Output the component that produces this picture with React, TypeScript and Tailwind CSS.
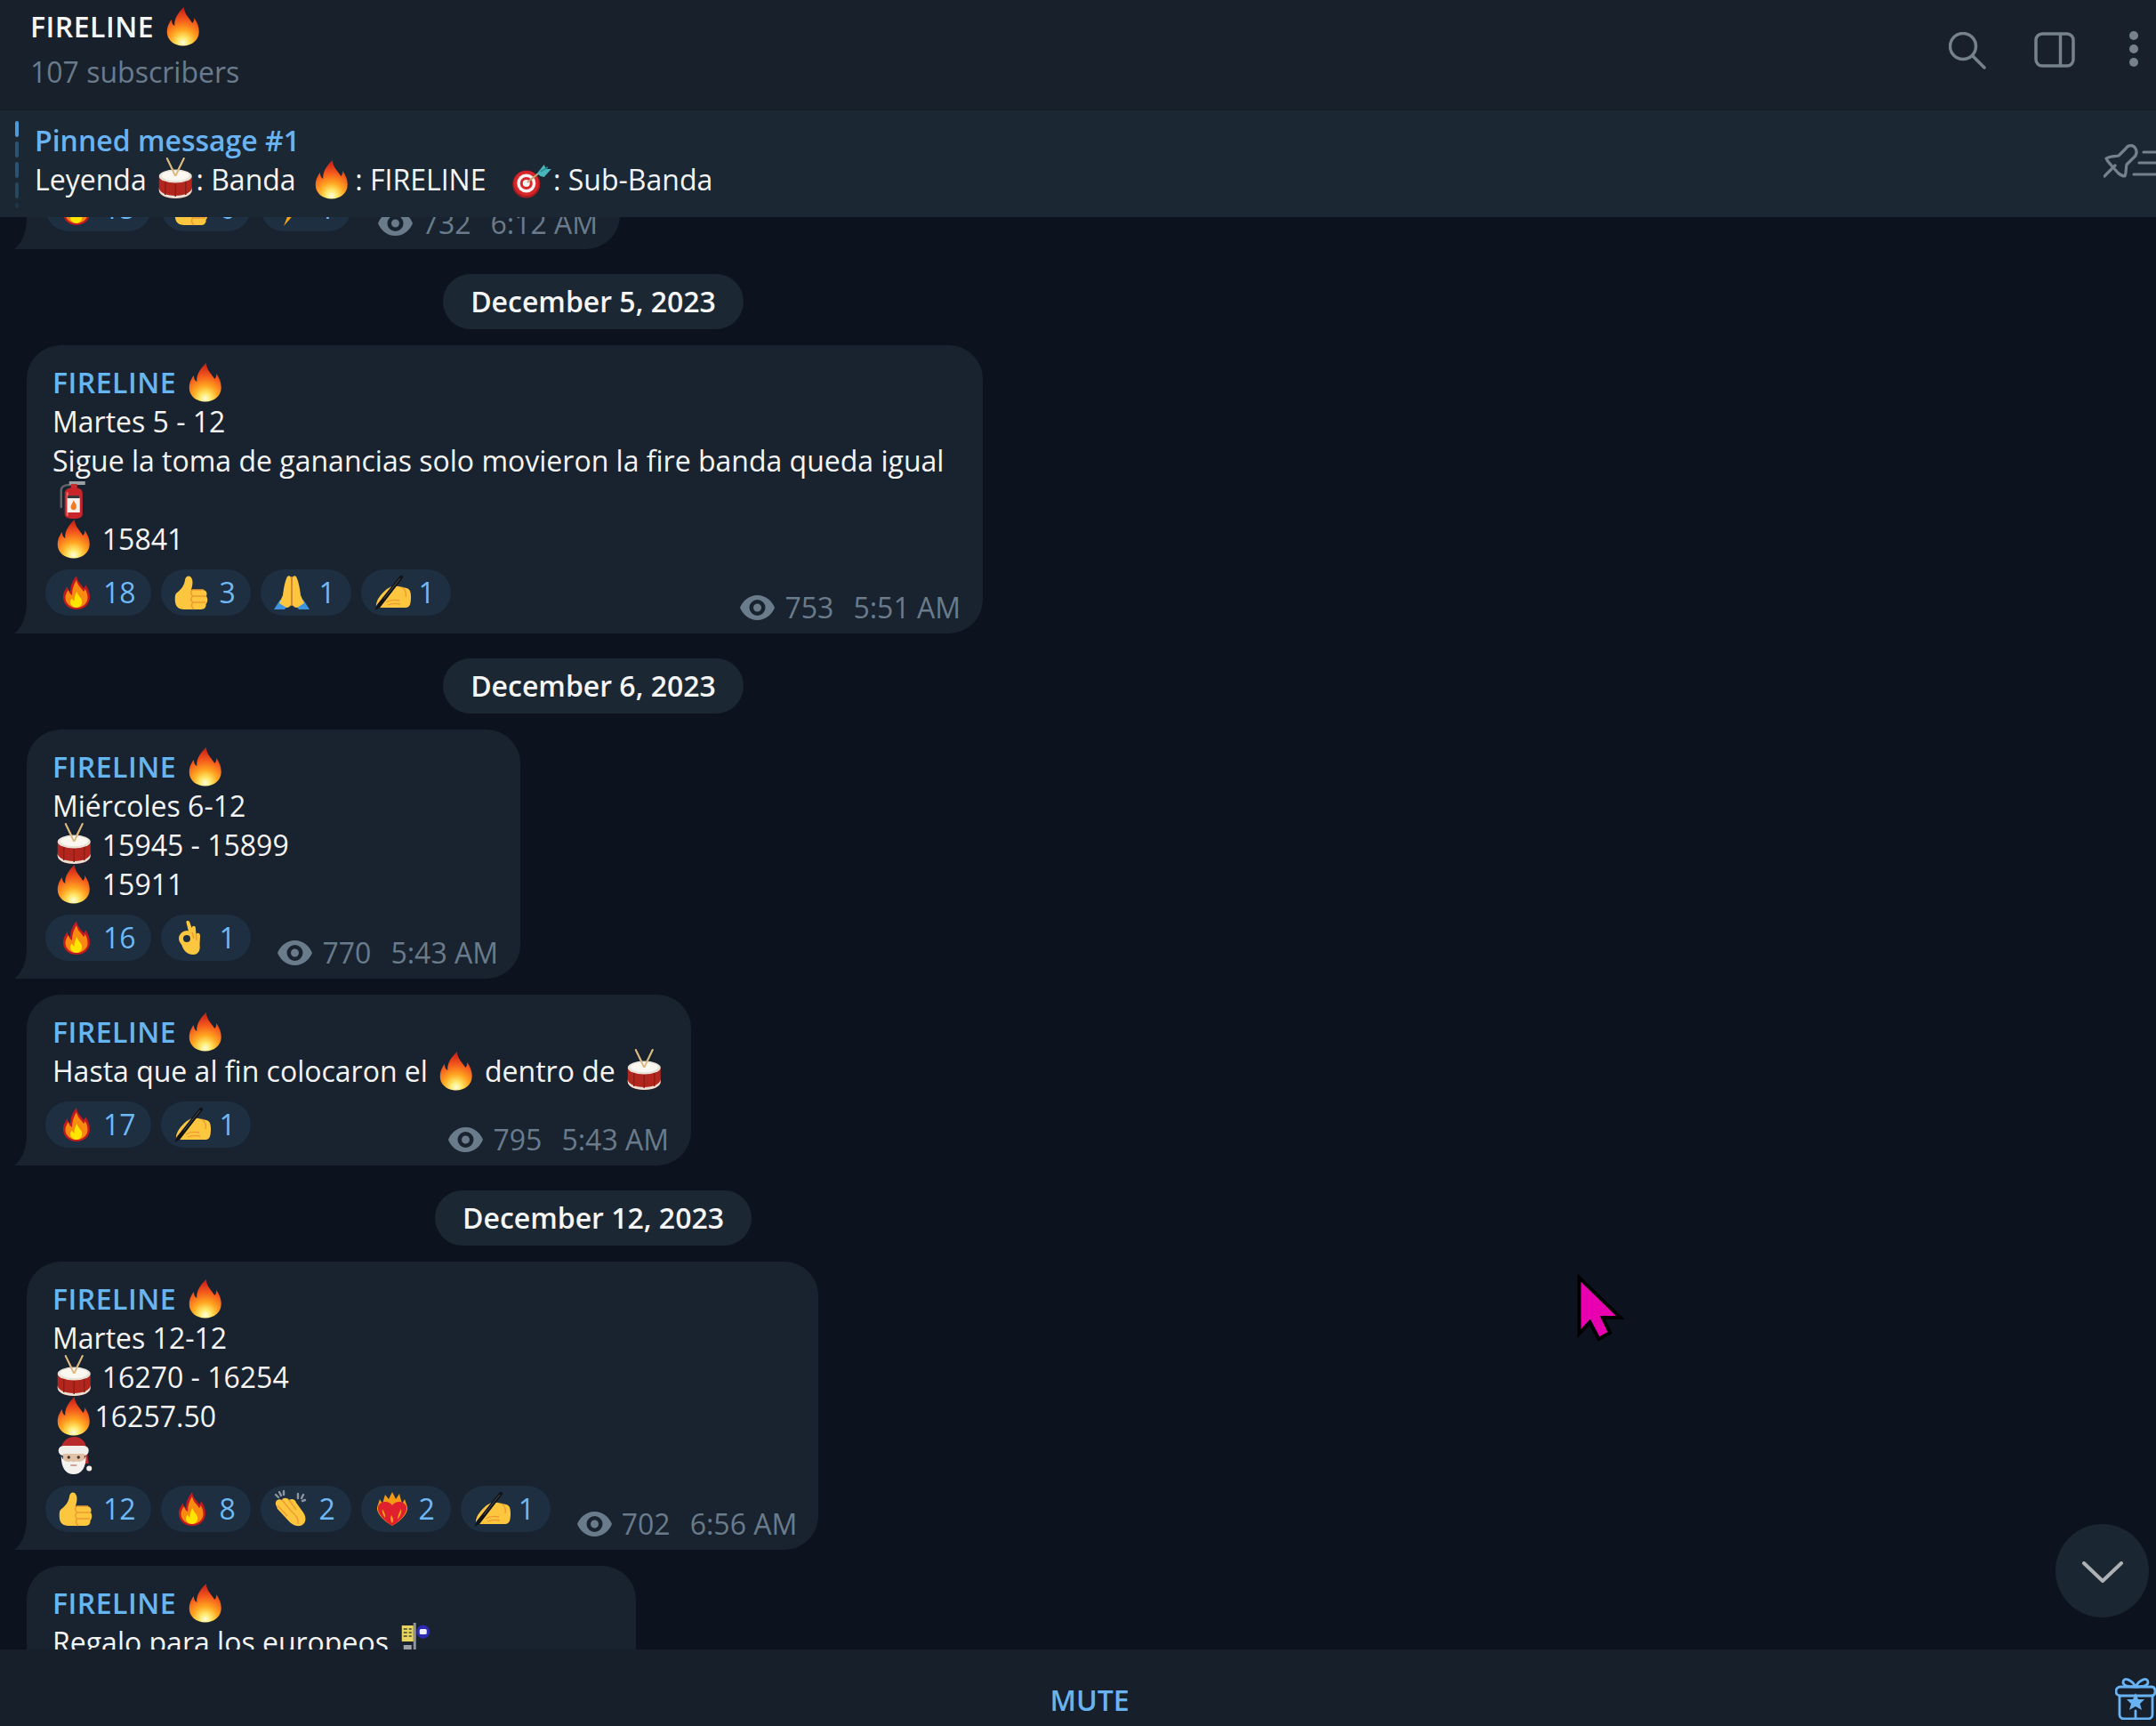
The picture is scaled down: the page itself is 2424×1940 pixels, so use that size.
import type { ReactNode } from "react";

// inline emoji, drawn on a 46x44 box so they sit in the 44px text lines
function Em({ children }: { children: ReactNode }) {
  return (
    <svg viewBox="0 0 46 44" className="inline-block h-[44px] w-[47.500px] shrink-0 align-top overflow-visible">
      {children}
    </svg>
  );
}

function RE({ children }: { children: ReactNode }) {
  return (
    <svg viewBox="0 0 38 40" className="h-[40px] w-[38px] shrink-0 overflow-visible">
      {children}
    </svg>
  );
}

function Flame() {
  return (
    <Em>
      <defs>
        <radialGradient id="flameFill" gradientUnits="userSpaceOnUse" cx="23" cy="40" r="38">
          <stop offset="0" stopColor="#fffde0" />
          <stop offset="0.16" stopColor="#ffe96a" />
          <stop offset="0.38" stopColor="#ffa621" />
          <stop offset="0.68" stopColor="#f4581c" />
          <stop offset="1" stopColor="#c9201a" />
        </radialGradient>
      </defs>
      <path
        d="M24 0C24.500 8 30 12 33.500 18C35.500 16 35.500 14 35.500 12C39 17 41 22 41 27.500C41 37 33 43.500 23 43.500C13 43.500 5 37 5 28C5 22 7.500 17.500 10 14C10.500 18 11.500 20 13.500 21C13 12 18 6 24 0Z"
        fill="url(#flameFill)"
      />
    </Em>
  );
}

function Drum() {
  return (
    <Em>
      <path d="M14 -2L24 18M33 -2L23 18" stroke="#d9b77e" strokeWidth="1.800" strokeLinecap="round" />
      <path d="M5 18V34C5 39 13 43 23.500 43C34 43 42 39 42 34V18Z" fill="#b3261e" />
      <path d="M5 34C5 39 13 43 23.500 43C34 43 42 39 42 34V31C42 36 34 40 23.500 40C13 40 5 36 5 31Z" fill="#e9dfd2" />
      <path d="M12 24V39M23.500 26V41M35 24V39" stroke="#8c1d17" strokeWidth="1.500" />
      <ellipse cx="23.500" cy="18" rx="18.500" ry="7.500" fill="#e8e2d8" />
      <ellipse cx="23.500" cy="17.500" rx="15.500" ry="5.500" fill="#fbf8f2" />
      <path d="M14 -2L23 17M33 -2L24 17" stroke="#d9b77e" strokeWidth="1.800" strokeLinecap="round" />
    </Em>
  );
}

function Target() {
  return (
    <Em>
      <circle cx="18" cy="27" r="15.500" fill="#a61b1f" />
      <circle cx="18" cy="26" r="14" fill="#d8262c" />
      <circle cx="18" cy="26" r="10.500" fill="#f8f2f0" />
      <circle cx="18" cy="26" r="7" fill="#d8262c" />
      <circle cx="18" cy="26" r="4" fill="#f8f2f0" />
      <path d="M19 25L34 13" stroke="#c9a770" strokeWidth="2" />
      <path d="M30 15L38 5L40 10L46 10L38 19L34 18Z" fill="#49b8bd" />
      <path d="M34 13L42 8" stroke="#2a8f96" strokeWidth="1.500" />
    </Em>
  );
}

function Extinguisher() {
  return (
    <Em>
      <path d="M9 30V11C9 7 13 5 18 5L34 3" fill="none" stroke="#5d6367" strokeWidth="2.500" strokeLinecap="round" />
      <path d="M18 1H36V5H18Z" fill="#9aa0a4" />
      <rect x="20" y="4" width="7" height="5" fill="#c42a2e" />
      <path d="M13 14C13 10 18 8 23 8C29 8 33 10 33 14V38C33 41 30 43 23 43C16 43 13 41 13 38Z" fill="#c8242b" />
      <path d="M16 14V39" stroke="#ea6a6a" strokeWidth="2" strokeLinecap="round" />
      <rect x="16" y="17" width="14" height="19" fill="#f4f1ec" />
      <rect x="16" y="17" width="14" height="3" fill="#38383c" />
      <path d="M23 22C24 25 27 27 26 31C25 34 21 34 20 31C19 28 22 26 23 22Z" fill="#ef7b22" />
    </Em>
  );
}

function Santa() {
  return (
    <Em>
      <path d="M9 15C10 5 17 1 24 1C32 1 37 6 38 17L40 31H34V15Z" fill="#b92a2a" />
      <circle cx="40.500" cy="36.500" r="3" fill="#f2efea" />
      <rect x="6" y="11" width="34" height="11" rx="5.500" fill="#f2efea" />
      <path d="M11 20H35V32H11Z" fill="#e0c1a6" />
      <circle cx="17.500" cy="24" r="1.700" fill="#4a3528" />
      <circle cx="28.500" cy="24" r="1.700" fill="#4a3528" />
      <path d="M9 22C9 36 14 43 23 43C32 43 37 36 37 22C35 28 32 29 28 29C26 28 24.500 28.500 23 29.500C21.500 28.500 20 28 18 29C14 29 11 28 9 22Z" fill="#f4f2ee" />
      <path d="M20 33H26" stroke="#c9887b" strokeWidth="1.500" strokeLinecap="round" />
    </Em>
  );
}

function BusStop() {
  return (
    <Em>
      <rect x="19" y="0" width="3" height="44" fill="#8f959a" />
      <rect x="6" y="3" width="13" height="18" fill="#e7d560" />
      <path d="M8 7H12M14 7H17M8 11H12M14 11H17M8 15H12M14 15H17" stroke="#6d6a3a" strokeWidth="2" />
      <circle cx="30" cy="10" r="7.500" fill="#2d2ab0" />
      <rect x="26" y="7" width="8" height="6" rx="1.500" fill="#f0f0f8" />
      <rect x="8" y="25" width="9" height="19" fill="#9da1a5" />
    </Em>
  );
}

function RFlame() {
  return (
    <RE>
      <path d="M19 1C20 8 24 10 27 15C28.500 13.500 29 12 29 11C32 15 34 20 34 25C34 33 28 39 19 39C10 39 4 33 4 25C4 20 6 17 9 13C9 16 10 18 12 19C12 12 15 6 19 1Z" fill="#c21a1e" />
      <path d="M19 6C20 12 24 14 27 19C28 18 28.500 17 28.500 16C30.500 19 31.500 22 31.500 26C31.500 32 26 37 19 37C12 37 6.500 32 6.500 26C6.500 22 8 20 10 17C10.500 20 12 22 14 23C14 16 16 11 19 6Z" fill="#f98a10" />
      <path d="M19.500 19C20 23 24 25 25 29C26 33 23 37 19 37C15 37 12 34 12 30.500C12 29 13 27.500 14 26.500C14.500 28 15.500 29 16.500 29.500C16.500 25.500 17.500 22 19.500 19Z" fill="#ffe500" />
    </RE>
  );
}

function RThumb() {
  return (
    <RE>
      <path d="M1 21C6 17 10 13 11 6C11.500 1 16.500 0 18.500 4C20.500 8 19 13 18 17H31C35 17 36.500 21 35 24C37 27 36.500 31 34.500 33C35 36 33 39 29 39H12C6 39 1 38 0 31C-0.500 27 -0.500 23 1 21Z" fill="#fcc63f" />
      <path d="M19 17H32M20 24H35M20 31H34M19 17C17 19 17 22 20 24C17 26 17 29 20 31C18 33 18 36 21 39" fill="none" stroke="#ee9a33" strokeWidth="1.500" />
    </RE>
  );
}

function RPray() {
  return (
    <RE>
      <path d="M6 28L-1 39H11L16 33ZM32 28L39 39H27L22 33Z" fill="#3f94dd" />
      <path d="M18.500 33V4C18 1 15 0 13.500 3C11 9 10 15 9 23L5 32L13 37C16 37 18 35 18.500 33Z" fill="#fcc63f" />
      <path d="M19.500 33V4C20 1 23 0 24.500 3C27 9 28 15 29 23L33 32L25 37C22 37 20 35 19.500 33Z" fill="#fcc63f" />
      <path d="M19 2V35" stroke="#ec8b2e" strokeWidth="1.600" />
    </RE>
  );
}

function RWrite() {
  return (
    <RE>
      <path d="M1 33C2 27 7 21 13 16C17 13 21 12 26 13L35 15C39 16 40 20 40 25C40 32 39 37 34 37H8C4 37 1 36 1 33Z" fill="#fcc63f" />
      <path d="M12 31C17 28 22 28 27 29M14 34C19 32 23 32 28 33M30 14C34 17 35 21 34 25" fill="none" stroke="#ee9a33" strokeWidth="1.300" />
      <path d="M-0.500 40L2 33.500L27.500 1.500C29 -0.500 32 1.500 31 3.500L5.500 36.500Z" fill="#111316" />
      <path d="M27.500 4.500L10 26.500" stroke="#4b5157" strokeWidth="1" strokeLinecap="round" />
    </RE>
  );
}

function ROk() {
  return (
    <RE>
      <circle cx="13" cy="21" r="6.500" fill="none" stroke="#fcc63f" strokeWidth="5" />
      <path d="M7 27C9 35 14 39 20 39C26 39 28.500 34 27.500 28L28 18C28 14 24.500 14 23.500 16L23 10C23 6 19.500 6 18.500 9L16.500 3C15.500 0 12 0 12.500 3L15 13L20 20C19 26 13 29 7 27Z" fill="#fcc63f" />
      <path d="M19 14L21 21M23.500 16L24 23" fill="none" stroke="#ee9a33" strokeWidth="1.400" />
    </RE>
  );
}

function RClap() {
  return (
    <RE>
      <path d="M1 15C0 10 5 8 8 10C9 7 14 7 16 10C19 8 23 9 24 13L32 24C36 30 35 36 30 38.500C25 40.500 19 38 15 33L3 20Z" fill="#fcc63f" />
      <path d="M8 10L19 23M16 10L24 21M3 16L14 28M19 23C24 27 27 32 26 37" fill="none" stroke="#ee9a33" strokeWidth="1.300" />
      <path d="M5 1L7 5M10 0L10 4M1 4L4 7M26 3L26 8M32 4L30 8M34 10L31 11" stroke="#8d96a0" strokeWidth="2.400" strokeLinecap="round" />
    </RE>
  );
}

function RHeart() {
  return (
    <RE>
      <path d="M5 9L8 14L11 4L15 9L19 1L23 9L27 3L30 14L33 9L36 18C37 24 30 33 19 39C8 33 1 24 2 18Z" fill="#f59a14" />
      <path d="M19 16C23 10 33 11 35 18C36 24 29 33 19 39C9 33 2 24 3 18C5 11 15 10 19 16Z" fill="#e0202e" />
      <path d="M8 20C7 25 10 28 11 30C12 27 10 24 8 20ZM29 20C30 25 27 29 25 32C25 27 27 24 29 20ZM18 27C16 31 18 35 19 36C21 33 20 30 18 27Z" fill="#f9a01b" />
    </RE>
  );
}

function RBolt() {
  return (
    <RE>
      <path d="M24 0L6 22H17L10 40L32 15H20Z" fill="#f4a51c" />
    </RE>
  );
}

function Eye() {
  return (
    <svg viewBox="0 0 39 28" className="mr-[11px] h-[28px] w-[39px] shrink-0" fill="#6a7b8b">
      <path fillRule="evenodd" d="M19.500 0C29 0 36 6.500 39 14C36 21.500 29 28 19.500 28C10 28 3 21.500 0 14C3 6.500 10 0 19.500 0ZM19.500 5A9 9 0 1 0 19.500 23A9 9 0 1 0 19.500 5ZM19.500 9.500A4.500 4.500 0 1 1 19.500 18.500A4.500 4.500 0 1 1 19.500 9.500Z" />
    </svg>
  );
}

function Reaction({ icon, count }: { icon: ReactNode; count: string }) {
  return (
    <div className="flex h-[52px] items-center rounded-full bg-[#1d2f41] pl-[16px] pr-[17.800px]">
      {icon}
      <span className="ml-[11px] text-[32px] leading-none text-[#6fb9f5]">{count}</span>
    </div>
  );
}

function Meta({ views, time }: { views: string; time: string }) {
  return (
    <div className="-mb-[5px] ml-auto flex h-[28px] items-center whitespace-nowrap pl-[30px] text-[32px] text-[#6a7b8b]">
      <Eye />
      <span>{views}</span>
      <span className="ml-[22px]">{time}</span>
    </div>
  );
}

function Name() {
  return (
    <div className="font-semibold tracking-[0.5px] text-[#66b6f2]">
      FIRELINE <Flame />
    </div>
  );
}

interface BubbleProps {
  width: string;
  children?: ReactNode;
  reactions?: ReactNode;
  meta?: ReactNode;
}

function Bubble({ width, children, reactions, meta }: BubbleProps) {
  return (
    <div className={`relative ml-[30px] rounded-[38px] rounded-bl-none bg-[#19232f] pb-[20px] pl-[29px] pt-[20px] ${width}`}>
      <svg viewBox="0 0 14 36" className="absolute -left-[14px] bottom-0 h-[36px] w-[14px]">
        <path d="M14 0C14 16 9 30 0 36H14Z" fill="#19232f" />
      </svg>
      <div className="whitespace-pre">{children}</div>
      {reactions && (
        <div className="-ml-[8px] mt-[12px] flex items-end pr-[25px]">
          <div className="flex gap-[11px]">{reactions}</div>
          {meta}
        </div>
      )}
    </div>
  );
}

function DatePill({ children }: { children: ReactNode }) {
  return (
    <div className="mb-[18px] mt-[28px] self-center rounded-full bg-[#1b2733] px-[31px] text-[32px] font-semibold leading-[62px] text-[#f5f5f5]">
      {children}
    </div>
  );
}

export default function App() {
  return (
    <div
      className="relative flex h-[1940px] w-full flex-col overflow-hidden bg-[#0c131e] text-[32px] leading-[44px] text-[#f5f5f5]"
      style={{ fontFamily: '"Open Sans", "Noto Sans", sans-serif' }}
    >
      <header className="flex h-[124px] shrink-0 justify-between border-b border-[#131b24] bg-[#18212b] pl-[34px]">
        <div className="pt-[8px]">
          <div className="font-semibold tracking-[0.5px]">
            FIRELINE <Flame />
          </div>
          <div className="mt-[7px] text-[#6a7b8b]">107 subscribers</div>
        </div>
        <div className="flex items-start pt-[36px]">
          <svg viewBox="0 0 42 42" fill="none" stroke="#75818d" strokeWidth="3.500" strokeLinecap="round" className="h-[42px] w-[42px]">
            <circle cx="16" cy="16" r="14.500" />
            <path d="M27 27L40 40" />
          </svg>
          <svg viewBox="0 0 46 40" fill="none" stroke="#75818d" strokeWidth="3.500" className="ml-[54px] h-[40px] w-[46px]">
            <rect x="2" y="2" width="42" height="36" rx="7" />
            <path d="M29.500 2V38" />
          </svg>
          <svg viewBox="0 0 10 40" fill="#75818d" className="ml-[61px] mr-[20px] mt-[-1px] h-[40px] w-[10px]">
            <circle cx="5" cy="5" r="5" />
            <circle cx="5" cy="20" r="5" />
            <circle cx="5" cy="35" r="5" />
          </svg>
        </div>
      </header>

      <div className="relative z-10 flex h-[120px] shrink-0 items-start justify-between bg-[#1b2733] pl-[17px]">
        <div className="flex pt-[12px]">
          <div className="flex w-[4px] flex-col gap-[5px] pt-0">
            <div className="h-[18px] rounded-sm bg-[#4f9bd9]" />
            <div className="h-[18px] rounded-sm bg-[#2a5375]" />
            <div className="h-[18px] rounded-sm bg-[#2a5375]" />
            <div className="h-[18px] rounded-sm bg-[#274660]" />
            <div className="h-[6px] rounded-sm bg-[#223649]" />
          </div>
          <div className="ml-[18px] whitespace-pre">
            <div className="font-semibold text-[#6ab3f3]">Pinned message #1</div>
            <div>
              Leyenda <Drum />: Banda  <Flame />
              <span className="ml-[2.500px]">: FIRELINE  </span>
              <span className="ml-[10px]">
                <Target />
              </span>
              <span className="ml-[1.500px]">: Sub-Banda</span>
            </div>
          </div>
        </div>
        <svg viewBox="0 0 59 38" fill="none" stroke="#75818d" strokeWidth="3.200" strokeLinecap="round" strokeLinejoin="round" className="mt-[38px] h-[38px] w-[59px]">
          <path d="M1 36L13 24" />
          <path d="M3 16C8 13 14 14 17 13L25 5C28 0 34 1 36 5C38 9 37 13 33 16L26 23C25 26 26 31 24 36C21 36 18 34 16 32L8 23C6 21 4 19 3 16Z" />
          <path d="M45 9H59M40 21H59M34 34H59" />
        </svg>
      </div>

      <main className="relative min-h-0 flex-1 overflow-hidden">
        <div className="-mt-[68px] flex w-[1334px] flex-col">
          <Bubble
            width="w-[667px]"
            reactions={
              <>
                <Reaction icon={<RFlame />} count="15" />
                <Reaction icon={<RThumb />} count="6" />
                <Reaction icon={<RBolt />} count="1" />
              </>
            }
            meta={<Meta views="732" time="6:12 AM" />}
          />

          <DatePill>December 5, 2023</DatePill>
          <Bubble
            width="w-[1075px]"
            reactions={
              <>
                <Reaction icon={<RFlame />} count="18" />
                <Reaction icon={<RThumb />} count="3" />
                <Reaction icon={<RPray />} count="1" />
                <Reaction icon={<RWrite />} count="1" />
              </>
            }
            meta={<Meta views="753" time="5:51 AM" />}
          >
            <Name />
            <div>Martes 5 - 12</div>
            <div>Sigue la toma de ganancias solo movieron la fire banda queda igual</div>
            <div>
              <Extinguisher />
            </div>
            <div>
              <Flame /> 15841
            </div>
          </Bubble>

          <DatePill>December 6, 2023</DatePill>
          <Bubble
            width="w-[555px]"
            reactions={
              <>
                <Reaction icon={<RFlame />} count="16" />
                <Reaction icon={<ROk />} count="1" />
              </>
            }
            meta={<Meta views="770" time="5:43 AM" />}
          >
            <Name />
            <div>Miércoles 6-12</div>
            <div>
              <Drum /> 15945 - 15899
            </div>
            <div>
              <Flame /> 15911
            </div>
          </Bubble>

          <div className="h-[18px] shrink-0" />
          <Bubble
            width="w-[747px]"
            reactions={
              <>
                <Reaction icon={<RFlame />} count="17" />
                <Reaction icon={<RWrite />} count="1" />
              </>
            }
            meta={<Meta views="795" time="5:43 AM" />}
          >
            <Name />
            <div>
              Hasta que al fin colocaron el <Flame /> dentro de <Drum />
            </div>
          </Bubble>

          <DatePill>December 12, 2023</DatePill>
          <Bubble
            width="w-[890px]"
            reactions={
              <>
                <Reaction icon={<RThumb />} count="12" />
                <Reaction icon={<RFlame />} count="8" />
                <Reaction icon={<RClap />} count="2" />
                <Reaction icon={<RHeart />} count="2" />
                <Reaction icon={<RWrite />} count="1" />
              </>
            }
            meta={<Meta views="702" time="6:56 AM" />}
          >
            <Name />
            <div>Martes 12-12</div>
            <div>
              <Drum /> 16270 - 16254
            </div>
            <div>
              <Flame />
              16257.50
            </div>
            <div>
              <Santa />
            </div>
          </Bubble>

          <div className="h-[18px] shrink-0" />
          <Bubble width="w-[685px]">
            <Name />
            <div>
              Regalo para los europeos <BusStop />
            </div>
          </Bubble>
        </div>

        {/* scroll to bottom */}
        <div className="absolute bottom-[36px] right-[8px] flex h-[105px] w-[105px] items-center justify-center rounded-full bg-[#1a2632]">
          <svg viewBox="0 0 46 24" fill="none" stroke="#adb1b5" strokeWidth="4" strokeLinecap="round" strokeLinejoin="round" className="mt-[2px] h-[24px] w-[46px]">
            <path d="M2 2L23 22L44 2" />
          </svg>
        </div>

        {/* cursor */}
        <svg viewBox="0 0 54 77" className="absolute left-[1773px] top-[1187px] h-[77px] w-[54px]">
          <path d="M2.500 5V68L14.500 55L24.500 74L37 67L29 50H49Z" fill="#e800b0" stroke="#000" strokeWidth="4" />
        </svg>
      </main>

      <footer className="relative flex h-[86px] shrink-0 items-center justify-center bg-[#17202a]">
        <span className="pl-[26px] pt-[27px] text-[32px] font-semibold uppercase text-[#6ab3f3]">Mute</span>
        <svg viewBox="0 0 46 48" fill="none" stroke="#6ab3f3" strokeWidth="2.800" strokeLinecap="round" strokeLinejoin="round" className="absolute right-0 top-[31px] h-[48px] w-[46px]">
          <path d="M23 11C19 3 9 -1 9 6C9 9 13 11 23 11C33 11 37 9 37 6C37 -1 27 3 23 11Z" />
          <path d="M6 11H41C44 11 45 13 45 16C45 19 44 21 41 21H6C3 21 1 19 1 16C1 13 3 11 6 11Z" />
          <path d="M5 21V42C5 45 7 47 10 47H37C40 47 42 45 42 42V21" />
          <path d="M23 38V47" />
          <path d="M23 18L26 25H33L28 30L30 37L23 33L16 37L18 30L13 25H20Z" fill="#6ab3f3" stroke="none" />
        </svg>
      </footer>
    </div>
  );
}
